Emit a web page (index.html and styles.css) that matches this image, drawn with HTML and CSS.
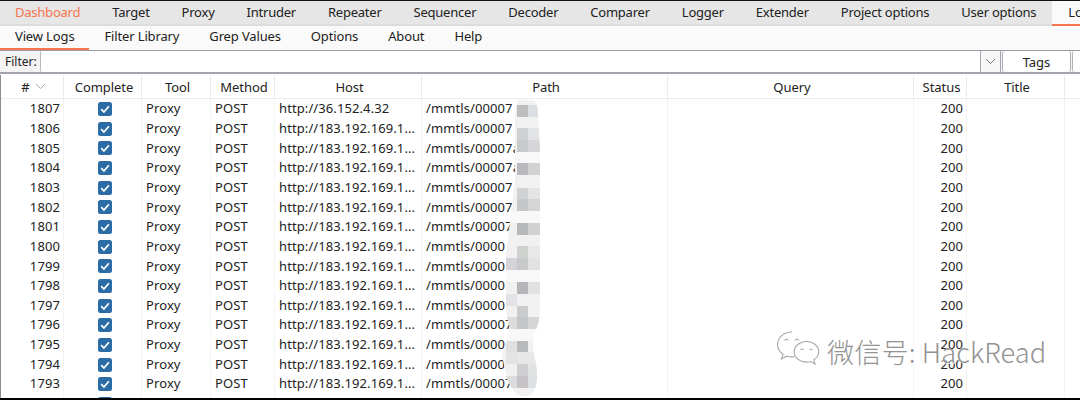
FILE: index.html
```html
<!DOCTYPE html>
<html lang="en">
<head>
<meta charset="utf-8">
<title>Logger++</title>
<link rel="stylesheet" href="styles.css">
</head>
<body>
<div class="app">
  <nav class="tabs">
    <span class="tab accent">Dashboard</span><span class="tab">Target</span><span class="tab">Proxy</span><span class="tab">Intruder</span><span class="tab">Repeater</span><span class="tab">Sequencer</span><span class="tab">Decoder</span><span class="tab">Comparer</span><span class="tab">Logger</span><span class="tab">Extender</span><span class="tab">Project options</span><span class="tab">User options</span><span class="tab current">Logger++</span>
  </nav>
  <nav class="subtabs">
    <span class="subtab current">View Logs</span><span class="subtab">Filter Library</span><span class="subtab">Grep Values</span><span class="subtab">Options</span><span class="subtab">About</span><span class="subtab">Help</span>
  </nav>
  <div class="filter">
    <label class="filter-label">Filter:</label>
    <div class="combo"><div class="combo-input"></div><div class="combo-arrow"><svg width="11" height="7" viewBox="0 0 11 7"><path d="M1 1l4.500 4.500L10 1" fill="none" stroke="#777" stroke-width="1"/></svg></div></div>
    <button class="btn">Tags</button>
    <button class="btn">Colors</button>
  </div>
  <div class="table">
    <div class="row head">
      <div class="hc">#<svg class="sort" width="11" height="7" viewBox="0 0 11 7"><path d="M1 1l4.500 4.500L10 1" fill="none" stroke="#aaa"/></svg></div><div class="hc">Complete</div><div class="hc">Tool</div><div class="hc">Method</div><div class="hc">Host</div><div class="hc">Path</div><div class="hc">Query</div><div class="hc">Status</div><div class="hc">Title</div><div class="hc">RTT</div>
    </div>
    <div id="rows"></div>
  </div>
  <svg class="smudge" width="42" height="300" viewBox="0 0 42 300" aria-hidden="true">
    <defs><clipPath id="blob"><path d="M18 0H34Q38 4 38 15L40 50V212Q40 220 34 235L33 250Q38 270 37 280Q36 293 28 296H20Q8 290 4 265L2 255L10 227Q7 220 6 210V155L15 80V25Q14 10 18 0Z"/></clipPath></defs>
    <g clip-path="url(#blob)">
      <rect width="42" height="300" fill="#f1f1f2"/>
      <rect x="17" y="5" width="11" height="12" fill="#bfbdbf"/><rect x="28" y="5" width="12" height="12" fill="#dbdfe3"/>
      <rect x="17" y="28" width="11" height="12" fill="#cfd0d3"/><rect x="28" y="28" width="12" height="12" fill="#e2e3e4"/>
      <rect x="17" y="40" width="11" height="12" fill="#c9cacc"/><rect x="28" y="40" width="12" height="12" fill="#d6d6d8"/>
      <rect x="0" y="52" width="42" height="12" fill="#f8f8f8"/>
      <rect x="17" y="63" width="11" height="12" fill="#b9babe"/><rect x="28" y="63" width="12" height="12" fill="#d2d0d2"/>
      <rect x="17" y="88" width="11" height="12" fill="#d0d1d2"/><rect x="28" y="88" width="12" height="12" fill="#e4e4e5"/>
      <rect x="17" y="99" width="11" height="12" fill="#c5c6c8"/><rect x="28" y="99" width="12" height="12" fill="#d5d5d6"/>
      <rect x="0" y="111" width="42" height="12" fill="#f8f8f8"/>
      <rect x="17" y="123" width="11" height="12" fill="#b7b8bc"/><rect x="28" y="123" width="12" height="12" fill="#d1d1d2"/>
      <rect x="17" y="146" width="11" height="12" fill="#cfd1cf"/><rect x="28" y="146" width="12" height="12" fill="#e8e8e8"/>
      <rect x="6" y="158" width="11" height="12" fill="#d6d3d8"/><rect x="17" y="158" width="11" height="12" fill="#c8c9cb"/><rect x="28" y="158" width="12" height="12" fill="#e1e2e2"/>
      <rect x="0" y="170" width="42" height="12" fill="#f8f8f8"/>
      <rect x="17" y="182" width="11" height="12" fill="#b5b6b9"/><rect x="28" y="182" width="12" height="12" fill="#e0e1e1"/>
      <rect x="6" y="194" width="11" height="12" fill="#e3e2e6"/>
      <rect x="17" y="206" width="11" height="12" fill="#cbcccd"/>
      <rect x="6" y="217" width="11" height="12" fill="#dcdcdc"/><rect x="17" y="217" width="11" height="12" fill="#c5c6c7"/><rect x="28" y="217" width="12" height="12" fill="#d5d5d6"/>
      <rect x="0" y="229" width="42" height="12" fill="#f8f8f8"/>
      <rect x="17" y="241" width="11" height="12" fill="#b9babd"/><rect x="6" y="241" width="11" height="12" fill="#e0e0e1"/>
      <rect x="6" y="252" width="11" height="12" fill="#e3e3e3"/><rect x="17" y="252" width="23" height="12" fill="#e7e7e7"/>
      <rect x="17" y="264" width="11" height="12" fill="#cfcfd1"/><rect x="28" y="264" width="12" height="12" fill="#e1e2e2"/>
      <rect x="6" y="276" width="11" height="12" fill="#dcdbdd"/><rect x="17" y="276" width="11" height="12" fill="#c6c2c6"/><rect x="28" y="276" width="12" height="12" fill="#dde1e3"/>
    </g>
  </svg>
  <div class="mark">
    <svg class="mark-icon" width="44" height="40" viewBox="0 0 44 40" aria-hidden="true">
      <g fill="#fff" fill-opacity=".7" stroke="#a9a9a9" stroke-width="1.100">
        <path d="M16 1C8 1 1.500 6.500 1.500 13.500c0 4 2.200 7.500 5.600 9.800L5.500 28l5.400-2.800c1.500.4 3.200.7 5 .7 1 0 1.900-.1 2.800-.2"/>
        <path d="M30.500 10.500c-6.800 0-12.300 4.600-12.300 10.300s5.500 10.300 12.300 10.300c1.400 0 2.800-.2 4-.6l4.600 2.500-1.300-4.200c3-1.900 5-4.800 5-8 0-5.700-5.500-10.300-12.300-10.300z"/>
      </g>
      <g fill="none" stroke="#a9a9a9" stroke-width="1.100"><path d="M8.500 9.500q2-2.500 4 0"/><path d="M19 9.500q2-2.500 4 0"/><path d="M24.500 19q1.500-2 3 0"/><path d="M33.500 19q1.500-2 3 0"/></g>
    </svg>
    <span class="mark-text">微信号: HackRead</span>
  </div>
</div>
<script src="app.js"></script>
</body>
</html>
```
FILE: styles.css
```css
* { box-sizing: border-box; }
html, body { margin: 0; padding: 0; }
body { width: 1080px; height: 400px; overflow: hidden; background: #000; font-family: "Noto Sans", "Open Sans", sans-serif; font-size: 13px; color: #222; }
.app { position: relative; width: 1080px; height: 398px; border-top: 1px solid #111; background: #fff; overflow: hidden; }
.tabs { display: flex; height: 25px; background: #e6e6e6; border-bottom: 2px solid #dcdcdc; white-space: nowrap; }
.tab { flex: none; padding: 2px 16px 0; line-height: 18px; letter-spacing: -.23px; }
.tab.accent { color: #f4754d; padding-left: 15px; }
.tab.current { background: #fafafa; margin-bottom: -2px; border-bottom: 2px solid #f4754d; }
.subtabs { display: flex; height: 24px; background: #fafafa; white-space: nowrap; }
.subtab { flex: none; padding: 1px 15px 0; line-height: 18px; letter-spacing: -.14px; }
.subtab.current { border-bottom: 2px solid #f4754d; }
.filter { display: flex; align-items: stretch; height: 24px; background: #f4f4f4; border-top: 1px solid #9c9ca6; border-bottom: 2px solid #a3a3ad; white-space: nowrap; }
.filter-label { flex: none; width: 40px; padding-left: 5px; line-height: 21px; font-size: 12px; }
.combo { flex: none; display: flex; width: 961px; background: #fff; border-left: 1px solid #b8b8be; border-radius: 2px 0 0 2px; }
.combo-input { flex: 1; }
.combo-arrow { flex: none; width: 21px; display: flex; align-items: center; justify-content: center; border-left: 1px solid #a6a6b0; border-right: 1px solid #a6a6b0; background: #f7f7f7; }
.btn { flex: none; width: 69px; margin-left: 1px; padding: 0; font: inherit; color: #222; background: #fff; border: 1px solid #b0b0b8; border-top: 0; border-bottom: 0; border-radius: 3px; }
.table { border-left: 1px solid #8c8c96; margin-top: 1px; }
.row { display: grid; grid-template-columns: 63px 78px 69px 64px 147px 246px 246px 53px 98px 60px; white-space: nowrap; }
.head { height: 24.4px; border-bottom: 1px solid #ececec; }
.hc { display: flex; align-items: center; justify-content: center; padding-left: 3px; border-right: 1px solid #ececec; letter-spacing: -.05px; }
.sort { margin-left: 5px; }
.body-row { height: 19.65px; line-height: 19.65px; }
.c { overflow: hidden; border-right: 1px solid #f4f4f4; padding-left: 4px; letter-spacing: .1px; }
.c.num { text-align: right; padding: 0 3px 0 0; }
.c.ck { display: flex; align-items: center; justify-content: center; padding: 0 0 0 5px; }
.check { display: block; }
.smudge { position: absolute; left: 500px; top: 99px; filter: blur(.6px); }
.mark { position: absolute; left: 776px; top: 330px; display: flex; align-items: center; gap: 7px; }
.mark-icon { flex: none; }
.mark-text { font-family: "Noto Sans CJK SC", "Noto Sans", sans-serif; font-size: 27.2px; font-weight: 300; color: #939393; letter-spacing: .1px; text-shadow: 1px 1px 0 rgba(255,255,255,.85), -1px 0 0 rgba(255,255,255,.6); }
```
FILE: app.js
```js
var paths = ["/mmtls/00007","/mmtls/00007","/mmtls/00007a","/mmtls/00007a","/mmtls/00007","/mmtls/00007","/mmtls/00007","/mmtls/0000","/mmtls/0000","/mmtls/0000","/mmtls/0000","/mmtls/00007","/mmtls/0000","/mmtls/0000","/mmtls/00007"];
var check = '<svg class="check" width="14" height="14" viewBox="0 0 14 14"><rect width="14" height="14" rx="2.500" fill="#2b6ca6"/><path d="M3.200 7.200l2.700 2.800 5-5.800" fill="none" stroke="#fff" stroke-width="1.700"/></svg>';
var html = "";
for (var i = 0; i < 16; i++) {
  var n = 1807 - i;
  var host = i === 0 ? "http://36.152.4.32" : "http://183.192.169.1...";
  html += '<div class="row body-row"><div class="c num">' + n + '</div><div class="c ck">' + check + '</div><div class="c">Proxy</div><div class="c">POST</div><div class="c">' + host + '</div><div class="c">' + (paths[i] || "") + '</div><div class="c"></div><div class="c num">200</div><div class="c"></div><div class="c"></div></div>';
}
document.getElementById("rows").innerHTML = html;
```
